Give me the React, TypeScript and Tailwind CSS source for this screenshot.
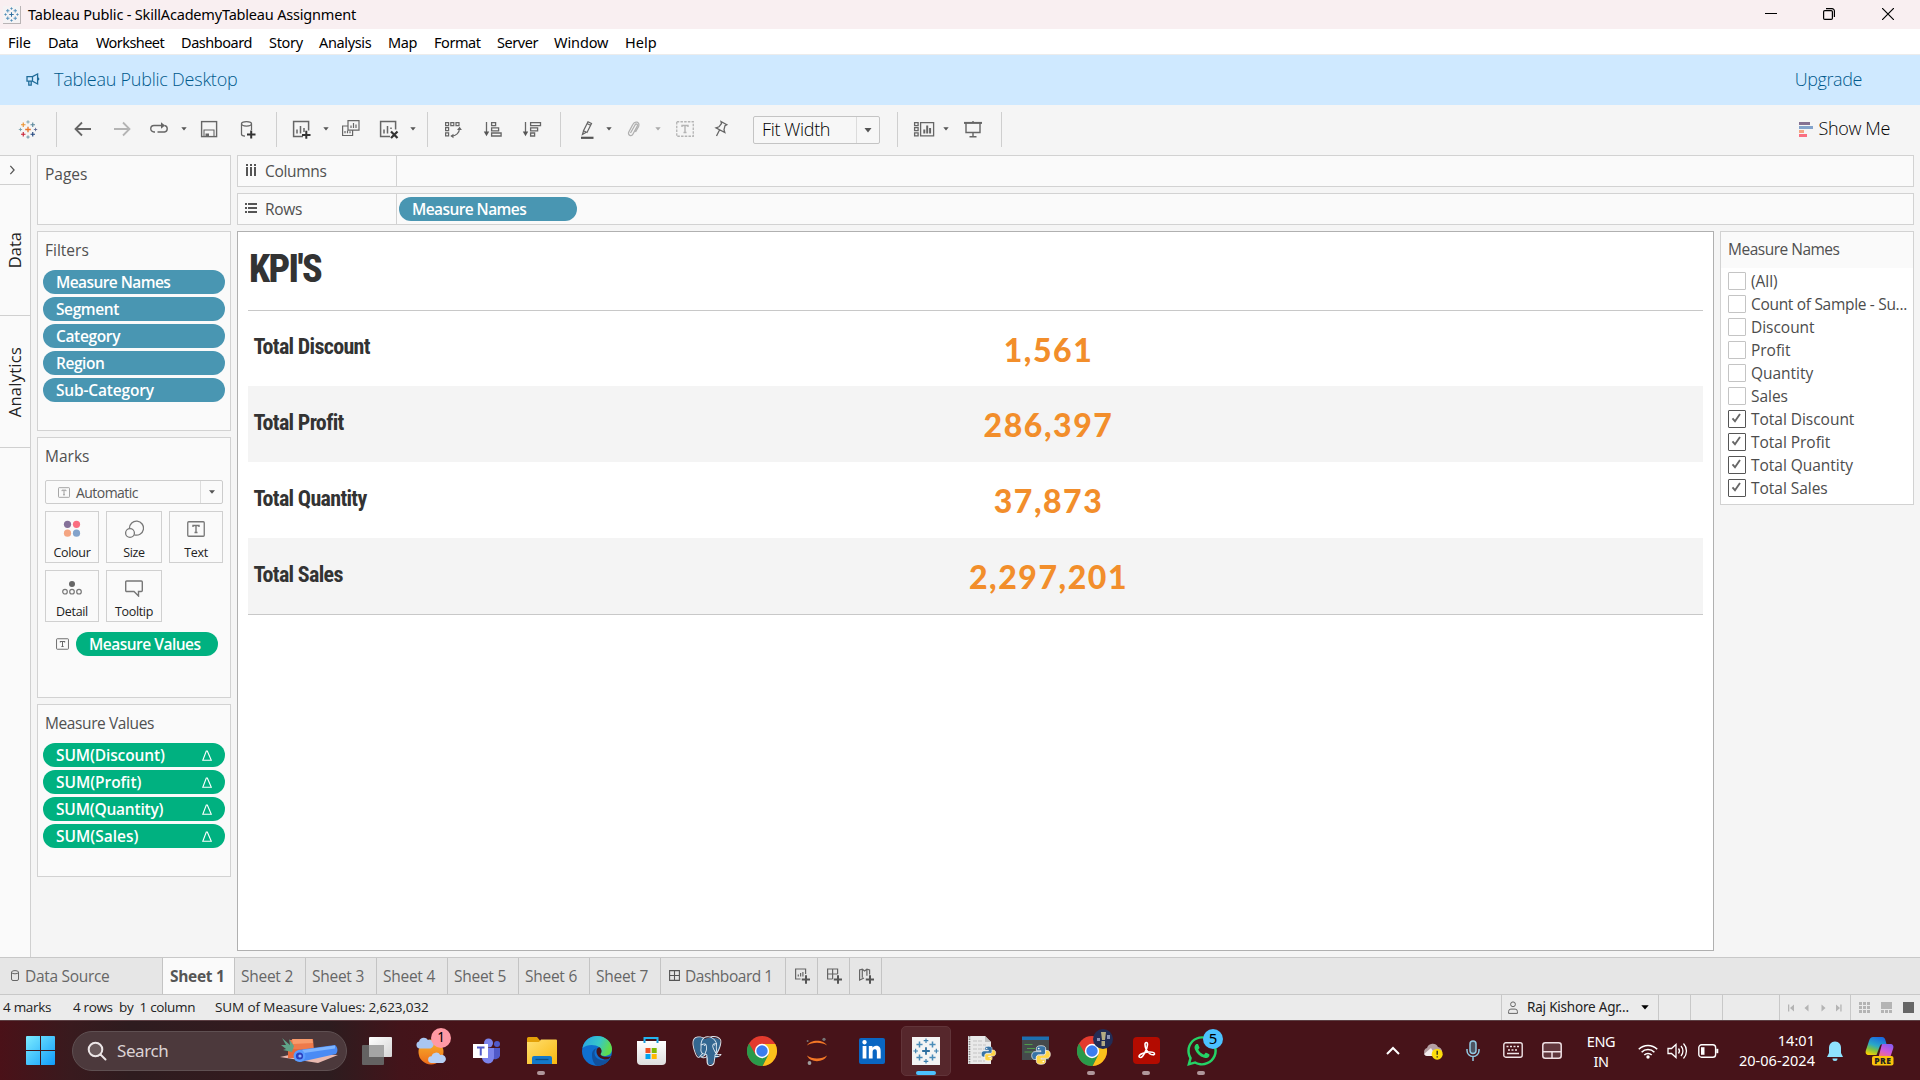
import React from "react";
import { FaLinkedinIn, FaWhatsapp } from "react-icons/fa";
import { SiPostgresql } from "react-icons/si";

type Kids = { children: React.ReactNode };

/* ---------- shared pieces ---------- */

function TBox({ className, color = "#666", dashed = false }: { className: string; color?: string; dashed?: boolean }) {
  return (
    <svg viewBox="0 0 18 16" className={className} fill="none" stroke={color}>
      <rect x="0.75" y="0.75" width="16.5" height="14.5" rx={dashed ? 0 : 1} strokeWidth="1.3" strokeDasharray={dashed ? "2.5 1.2" : undefined} />
      <path d="M6 6V4.5h6V6M9 4.5v7M7.5 11.5h3" strokeWidth="1.4" />
    </svg>
  );
}

function Caret({ className, color = "#555" }: { className: string; color?: string }) {
  return (
    <svg viewBox="0 0 6 4" className={"h-1 w-1.5 shrink-0 " + className}>
      <path d="M0.3 0.3h5.4L3 3.6z" fill={color} />
    </svg>
  );
}

function Sep({ className }: { className: string }) {
  return <div className={"h-[35px] w-px shrink-0 bg-[#cfcfcf] " + className} />;
}

function Ic({ className = "", w = 20, color = "#666", children }: Kids & { className?: string; w?: number; color?: string }) {
  return (
    <svg viewBox={`0 0 ${w} 20`} width={w} height={20} className={"shrink-0 " + className} fill="none" stroke={color} strokeWidth="1.25">
      {children}
    </svg>
  );
}

function TableauMark({ className, mono = false }: { className: string; mono?: boolean }) {
  const c = mono
    ? ["#2f6f9f", "#4b8cb8", "#4b8cb8", "#4b8cb8", "#4b8cb8", "#3b7fae", "#3b7fae", "#3b7fae", "#3b7fae"]
    : ["#e8762c", "#eb912c", "#59879b", "#c72035", "#1f447e", "#7099a6", "#5b6591", "#5b879b", "#7099a6"];
  const plus = (x: number, y: number, r: number, col: string, sw: number) => (
    <path key={`${x}-${y}`} d={`M${x - r} ${y}h${2 * r}M${x} ${y - r}v${2 * r}`} stroke={col} strokeWidth={sw} />
  );
  return (
    <svg viewBox="0 0 34 34" className={className} fill="none">
      {plus(17, 17, 5, c[0], 2.4)}
      {plus(8.5, 8.5, 4, c[1], 2)}
      {plus(25.5, 8.5, 4, c[2], 2)}
      {plus(8.5, 25.5, 4, c[3], 2)}
      {plus(25.5, 25.5, 4, c[4], 2)}
      {plus(17, 3.5, 3, c[5], 1.5)}
      {plus(30.5, 17, 3, c[6], 1.5)}
      {plus(17, 30.5, 3, c[7], 1.5)}
      {plus(3.5, 17, 3, c[8], 1.5)}
    </svg>
  );
}

/* ---------- window chrome ---------- */

function TitleBar() {
  return (
    <div className="flex h-[29px] items-center bg-[#f9eff1]">
      <div className="ml-[3px] flex h-[18px] w-[18px] items-center justify-center border-r border-b border-[#b9b4b5] bg-[#f5f3f4]">
        <TableauMark mono className="h-[15px] w-[15px]" />
      </div>
      <span className="ml-[7px] text-[14.5px] tracking-[-0.188px] text-black">Tableau Public - SkillAcademyTableau Assignment</span>
      <div className="mr-[26px] ml-auto flex -translate-y-px items-center">
        <svg viewBox="0 0 12 12" className="h-3 w-3" stroke="#000"><path d="M0 5.5h12" /></svg>
        <svg viewBox="0 0 12 12" className="ml-[46px] h-3 w-3" fill="none" stroke="#000" strokeWidth="1.2">
          <rect x="0.6" y="2.6" width="8.8" height="8.8" rx="1.2" />
          <path d="M3 0.7h6a2.4 2.4 0 0 1 2.4 2.4v6" />
        </svg>
        <svg viewBox="0 0 12 12" className="ml-[47px] h-3 w-3" stroke="#000" strokeWidth="1.2"><path d="M0 0l12 12M12 0L0 12" /></svg>
      </div>
    </div>
  );
}

const menu: [string, string][] = [
  ["File", "w-10 tracking-[-0.1px]"], ["Data", "w-12"], ["Worksheet", "w-[85px] tracking-[-0.57px]"], ["Dashboard", "w-[88px]"], ["Story", "w-[50px] tracking-[-0.3px]"],
  ["Analysis", "w-[69px] tracking-[-0.35px]"], ["Map", "w-[46px]"], ["Format", "w-[63px]"], ["Server", "w-[57px]"], ["Window", "w-[71px] tracking-[-0.1px]"], ["Help", "w-[60px] tracking-[0.05px]"],
];

function MenuBar() {
  return (
    <div className="flex h-[26px] items-center border-b border-[#ececec] bg-white pt-[3px] pl-2 text-[14.5px] tracking-[-0.45px] text-black">
      {menu.map(([m, w]) => <div key={m} className={"shrink-0 " + w}>{m}</div>)}
    </div>
  );
}

function Banner() {
  return (
    <div className="flex h-[50px] items-center bg-[#cfe9ff] font-['Open_Sans'] text-[18px] text-[#005a8c]">
      <svg viewBox="0 0 14 14" className="ml-[26px] h-[14px] w-[14px]" fill="none" stroke="#1f6c99" strokeWidth="1.3">
        <path d="M1 3.6h5.5L11.6 1v10L6.500 8.200H1zM6.500 3.600v4.600M2.800 8.200v4h2.400v-4M11.600 4.800c1.500.2 1.500 2.200 0 2.400" />
      </svg>
      <span className="-mt-px ml-[14px] text-[18px] font-light tracking-[-0.24px]">Tableau Public Desktop</span>
      <span className="-mt-px mr-[58px] ml-auto font-light tracking-[-0.42px]">Upgrade</span>
    </div>
  );
}

function Toolbar() {
  return (
    <div className="flex h-[50px] items-center bg-[#f5f5f5] pb-[2px]">
      <TableauMark className="ml-[18px] h-[19px] w-5 shrink-0" />
      <Sep className="ml-[18px]" />
      <Ic className="ml-4"><path d="M2.5 10H18M9 3.500L2.500 10 9 16.500" strokeWidth="1.8" /></Ic>
      <Ic className="ml-[19px]" color="#b4b4b4"><path d="M2 10h15.500M11 3.500l6.500 6.500-6.500 6.500" strokeWidth="1.8" /></Ic>
      <Ic className="ml-[17px]"><path d="M6 13H5a3.200 3.200 0 0 1 0-6.500H14.500M15.500 6.500a3.300 3.300 0 0 1 0 6.500H8.500" strokeWidth="1.4" /><path d="M12 3.200l4 3.300-4 3.300z" fill="#666" stroke="none" /></Ic>
      <Caret className="ml-3" />
      <Ic className="ml-3"><rect x="2.600" y="2.600" width="15" height="15" strokeWidth="1.400" /><path d="M5 17.500v-6.500h10v6.500" strokeWidth="1.100" /><path d="M6.500 14.500h3.500v3h-3.500z" fill="#666" stroke="none" /></Ic>
      <Ic className="ml-[19px]">
        <ellipse cx="8.500" cy="4.800" rx="5" ry="2.200" /><path d="M3.500 4.800v10.500c0 1 1.500 1.700 3.500 1.900M13.500 4.800V11" />
        <path d="M9 15.500h8.500M13.200 11.500v8" stroke="#333" strokeWidth="2" />
      </Ic>
      <Sep className="ml-[18px]" />
      <Ic className="ml-[14px]" w={22}>
        <path d="M12 17.500H2.600v-15h15v9M6 14.500v-4M9.500 14.500V7M13 13V9" strokeWidth="1.500" /><path d="M11 16h8.500M15.300 11.800v8" stroke="#333" strokeWidth="2" />
      </Ic>
      <Caret className="ml-[10px]" />
      <Ic className="ml-[11px]"><path d="M8 1.600h11v9.500H8zM11 9V6.500M13.500 9V4M16 9V5.500M8 7H2.600v9.500h10v-5M5 14.300v-2.300M7.500 14.300v-2.500M10 14.300v-2" strokeWidth="1.200" /></Ic>
      <Ic className="ml-[18px]" w={22}>
        <path d="M12 17.500H2.600v-15h15v8M6 14.500v-4M9.500 14.500V7M13 10V8.500" strokeWidth="1.500" /><path d="M13 12.500l6.500 6.500M19.500 12.500L13 19" stroke="#333" strokeWidth="2.200" />
      </Ic>
      <Caret className="ml-[10px]" />
      <Sep className="ml-[11px]" />
      <Ic className="ml-[15px]">
        <path d="M2.600 3.600h3v3h-3zM7.800 3.600h3v3h-3zM13 3.600h3v3h-3zM2.600 8.700h3v3h-3zM2.600 13.900h3v3h-3zM16.500 9c0 5-3.500 8-8 8" strokeWidth="1.200" />
        <path d="M14 11l2.600-3.200 2.300 3.200zM10.500 14.700L7.300 17l3.200 2.300z" fill="#666" stroke="none" />
      </Ic>
      <Ic className="ml-5"><path d="M3.500 3v11M8.600 3.600h4v3h-4zM8.600 8.800h7v3h-7zM8.600 14h9.500v3H8.600z" strokeWidth="1.300" /><path d="M0.800 12.500h5.400L3.500 17.200z" fill="#555" stroke="none" /></Ic>
      <Ic className="ml-[19px]"><path d="M3.500 3v11M8.600 3.600h9.900v3H8.600zM8.600 8.800h7v3h-7zM8.600 14h4v3h-4z" strokeWidth="1.300" /><path d="M0.800 12.500h5.400L3.500 17.200z" fill="#555" stroke="none" /></Ic>
      <Sep className="ml-[18px]" />
      <Ic className="ml-[17px]"><path d="M10 2.800l3.500 1.700-4.500 9-3.500-1.800zM5.500 12l-1 3.500 3.300-2M9 4.500l4 2" /><path d="M3 18.800h12.500" stroke="#555" strokeWidth="2.200" /></Ic>
      <Caret className="ml-2" />
      <Ic className="ml-[11px]" color="#b0b0b0"><path d="M7.500 14l4.500-8c1-1.800 3-.8 2.300 1l-4.300 8c-1.500 3-5.700 1.200-4.200-2l4-7.500c2-4 7.500-2.800 5.800 2L12.500 13" strokeWidth="1.300" /></Ic>
      <Caret className="ml-3" color="#aaa" />
      <div className="ml-[14px] flex w-5 shrink-0 justify-center"><TBox dashed color="#b4b4b4" className="h-4 w-[18px]" /></div>
      <Ic className="ml-[16px]"><path d="M10 2.500l5.800 3.200-1.800 1-1 4 .8 2.800L5 8.800l3-1 2.500-3.300zM8.500 11l-3 6" strokeWidth="1.300" /></Ic>
      <div className="ml-[22px] flex h-7 w-[127px] shrink-0 translate-y-[1px] items-center rounded-[2px] border border-[#c4c4c4] bg-[#f7f7f7]">
        <span className="-mt-px ml-2 font-['Open_Sans'] text-[18px] font-light tracking-[-0.36px] text-black">Fit Width</span>
        <div className="ml-auto flex h-full w-[23px] items-center justify-center border-l border-[#dcdcdc]">
          <svg viewBox="0 0 8 5" className="h-[5px] w-2"><path d="M0.500 0h7L4 4.500z" fill="#555" /></svg>
        </div>
      </div>
      <Sep className="ml-[17px]" />
      <Ic className="ml-[15px]" w={22}>
        <path d="M1.600 3.600h3.500v3H1.600zM1.600 8.700h3.500v3H1.600zM1.600 13.800h3.500v3H1.600zM7.600 3.600h13v13.200h-13z" strokeWidth="1.300" />
        <path d="M11.300 14.500v-4M14.200 14.500V6.500M17.100 14.500V9" strokeWidth="2" />
      </Ic>
      <Caret className="ml-2" />
      <Ic className="ml-[14px]"><path d="M1 3.900h18" strokeWidth="2" /><path d="M3 4v9.500h14V4M10 13.500v4.500M6.500 17.800h7M10 2v2" strokeWidth="1.400" /></Ic>
      <Sep className="ml-[18px]" />
      <div className="mr-[30px] ml-auto flex items-center">
        <div className="flex w-[14px] flex-col gap-px">
          <div className="h-[3px] w-[11px] bg-[#857192]" /><div className="h-[3px] w-[14px] bg-[#83a3cb]" />
          <div className="h-[3px] w-[5px] bg-[#f4a582]" /><div className="h-[3px] w-2 bg-[#fa6f81]" />
        </div>
        <span className="-mt-px ml-1.5 font-['Open_Sans'] text-[18px] font-light tracking-[-0.38px] text-black">Show Me</span>
      </div>
    </div>
  );
}

/* ---------- side panels ---------- */

function Panel({ title, className, children }: { title: string; className: string; children?: React.ReactNode }) {
  return (
    <section className={"shrink-0 border border-[#d2d2d2] bg-[#fafafa] " + className}>
      <h2 className="flex h-[38px] items-center pb-px pl-[7px] text-[15.5px] font-normal text-[#505050]">{title}</h2>
      {children}
    </section>
  );
}

function Pill({ label, className, delta = false }: { label: React.ReactNode; className: string; delta?: boolean }) {
  return (
    <div className={"flex h-6 items-center rounded-full pt-0.5 pl-[13px] text-[15.5px] font-semibold text-white " + className}>
      {label}
      {delta && (
        <svg viewBox="0 0 10 11" className="-mt-0.5 mr-[13px] ml-auto h-[11px] w-[10px]" fill="none" stroke="#fff" strokeWidth="1.1"><path d="M5.300 1L9.300 10.300H0.800L4.300 1z" /></svg>
      )}
    </div>
  );
}

const filters: [string, string][] = [
  ["Measure Names", "tracking-[-0.57px]"], ["Segment", "tracking-[-0.4px]"], ["Category", "tracking-[-0.35px]"], ["Region", "tracking-[-0.45px]"], ["Sub-Category", "tracking-[-0.16px]"],
];
const sums: [string, string][] = [
  ["SUM(Discount)", "tracking-[-0.12px]"], ["SUM(Profit)", "tracking-[-0.05px]"], ["SUM(Quantity)", "tracking-[-0.2px]"], ["SUM(Sales)", "tracking-[0px]"],
];

function MarkButton({ label, className, children }: Kids & { label: string; className: string }) {
  return (
    <div className={"flex h-[52px] flex-col items-center border border-[#d0d0d0] pt-[7px] " + className}>
      <div className="flex h-5 items-center">{children}</div>
      <span className="mt-[6px] text-[12.5px] leading-4 tracking-[-0.32px] text-[#222]">{label}</span>
    </div>
  );
}

function LeftColumn() {
  return (
    <div className="ml-1.5 flex w-[194px] shrink-0 flex-col gap-1.5">
      <Panel title="Pages" className="h-[70px]" />
      <Panel title="Filters" className="h-[200px]">
        <div className="flex flex-col gap-[3px] px-[5px]">
          {filters.map(([f, t]) => <Pill key={f} label={<span className={t}>{f}</span>} className="bg-[#4996b2]" />)}
        </div>
      </Panel>
      <Panel title="Marks" className="h-[261px]">
        <div className="mt-1 ml-[7px] flex h-6 w-[178px] items-center rounded-[2px] border border-[#ccc]">
          <TBox color="#999" className="ml-3 h-[11px] w-[12px]" />
          <span className="ml-[6px] text-[14px] tracking-[-0.55px] text-[#555]">Automatic</span>
          <div className="ml-auto flex h-full w-[22px] items-center justify-center border-l border-[#ddd]"><Caret className="scale-110" /></div>
        </div>
        <div className="mt-[7px] ml-[7px] flex gap-[7px]">
          <MarkButton label="Colour" className="w-[54px]">
            <svg viewBox="0 0 18 18" className="h-[18px] w-[18px]"><circle cx="4.500" cy="4.300" r="3.600" fill="#857199" /><circle cx="13.500" cy="4.300" r="3.600" fill="#fa6f81" /><circle cx="4.500" cy="13.200" r="3.600" fill="#f4a582" /><circle cx="13.500" cy="13.200" r="3.600" fill="#83a3cb" /></svg>
          </MarkButton>
          <MarkButton label="Size" className="w-14">
            <svg viewBox="0 0 20 20" className="mr-px h-5 w-5" fill="none" stroke="#777" strokeWidth="1.300"><path d="M5.500 9.300A7 7 0 1 1 10.300 15.800" /><circle cx="6" cy="14" r="4.400" /></svg>
          </MarkButton>
          <MarkButton label="Text" className="w-[54px]"><TBox color="#777" className="h-4 w-[18px]" /></MarkButton>
        </div>
        <div className="mt-[7px] ml-[7px] flex gap-[7px]">
          <MarkButton label="Detail" className="w-[54px]">
            <svg viewBox="0 0 20 16" className="h-4 w-5" fill="none" stroke="#777" strokeWidth="1.200"><circle cx="10" cy="4" r="3" fill="#666" stroke="none" /><circle cx="3" cy="11.700" r="2.300" /><circle cx="10" cy="11.700" r="2.300" /><circle cx="17" cy="11.700" r="2.300" /></svg>
          </MarkButton>
          <MarkButton label="Tooltip" className="w-14">
            <svg viewBox="0 0 18 18" className="h-[18px] w-[18px]" fill="none" stroke="#777" strokeWidth="1.400"><path d="M1.700 2h14.600a1 1 0 0 1 1 1v8.500a1 1 0 0 1-1 1H13.500V17L9 12.500H1.700a1 1 0 0 1-1-1V3a1 1 0 0 1 1-1z" /></svg>
          </MarkButton>
        </div>
        <div className="mt-[10px] flex items-center pl-[18px]">
          <TBox className="h-3 w-[13px]" />
          <Pill label={<span className="tracking-[-0.5px]">Measure Values</span>} className="ml-[7px] w-[142px] bg-[#00b180]" />
        </div>
      </Panel>
      <Panel title="Measure Values" className="h-[173px] tracking-[-0.4px]">
        <div className="flex flex-col gap-[3px] px-[5px]">
          {sums.map(([s, t]) => <Pill key={s} delta label={<span className={t}>{s}</span>} className="bg-[#00b180]" />)}
        </div>
      </Panel>
    </div>
  );
}

function Rail() {
  return (
    <div className="flex w-[31px] shrink-0 flex-col border-t border-r border-[#d0d0d0] bg-[#fafafa] text-[17px] text-[#222]">
      <div className="flex h-[29px] items-center border-b border-[#d0d0d0] pl-2">
        <svg viewBox="0 0 8 12" className="h-[10px] w-2" fill="none" stroke="#555" strokeWidth="1.500"><path d="M2 1l4.500 5L2 11" /></svg>
      </div>
      <div className="flex h-[131px] items-center justify-center border-b border-[#d0d0d0]">
        <span className="rotate-180 font-['Open_Sans'] text-[16.5px] [writing-mode:vertical-rl]">Data</span>
      </div>
      <div className="flex h-[132px] items-center justify-center border-b border-[#d0d0d0]">
        <span className="translate-y-px rotate-180 font-['Open_Sans'] text-[16.5px] tracking-[0.25px] [writing-mode:vertical-rl]">Analytics</span>
      </div>
    </div>
  );
}

/* ---------- shelves and view ---------- */

function Shelf({ label, icon, children }: { label: string; icon: React.ReactNode; children?: React.ReactNode }) {
  return (
    <div className="flex h-8 items-center border border-[#d2d2d2] bg-[#fafafa]">
      <div className="flex h-full w-[159px] items-center border-r border-[#d2d2d2] pl-[7px] text-[15.5px] tracking-[-0.3px] text-[#505050]">
        {icon}<span className="mt-0.5 ml-2">{label}</span>
      </div>
      {children}
    </div>
  );
}

const kpis: [string, string][] = [
  ["Total Discount", "1,561"], ["Total Profit", "286,397"], ["Total Quantity", "37,873"], ["Total Sales", "2,297,201"],
];

function View() {
  return (
    <div className="h-[720px] w-[1477px] border border-[#b0b0b0] bg-white px-[10px] pt-[15px]">
      <h1 className="h-[63px] pl-px font-['Roboto_Condensed'] text-[38px] leading-[44px] font-extrabold tracking-[-1.6px] text-[#333]">KPI&apos;S</h1>
      <div className="border-y border-[#c8c8c8]">
        {kpis.map(([k, v], i) => (
          <div key={k} className={(i % 2 ? "bg-[#f4f4f4] " : "") + (i === 0 ? "h-[75px] " : "h-[76px] ") + "flex items-center"}>
            <span className="w-[145px] shrink-0 -translate-y-[2px] pl-[5.5px] font-['Roboto_Condensed'] text-[22px] font-bold tracking-[-0.68px] text-[#333]">{k}</span>
            <span className="grow translate-y-px pl-px text-center font-['Lato'] text-[32px] font-black tracking-[1.55px] text-[#f28e2b]">{v}</span>
          </div>
        ))}
      </div>
    </div>
  );
}

const measures = ["(All)", "Count of Sample - Su...", "Discount", "Profit", "Quantity", "Sales", "Total Discount", "Total Profit", "Total Quantity", "Total Sales"];

function MeasureFilter() {
  return (
    <div className="h-[274px] w-[194px] border border-[#d2d2d2] bg-white">
      <h2 className="flex h-9 items-center bg-[#fafafa] pl-[7px] text-[15.5px] font-normal tracking-[-0.5px] text-[#505050]">Measure Names</h2>
      <ul className="pt-1 pl-[7px]">
        {measures.map((m, i) => (
          <li key={m} className="flex h-[23px] items-center">
            <span className={(i > 5 ? "border-[#555] " : "border-[#c4c4c4] ") + "mb-[5px] flex h-[18px] w-[18px] shrink-0 items-center justify-center rounded-[1px] border bg-white"}>
              {i > 5 && <svg viewBox="0 0 10 10" className="mr-[3px] mb-0.5 h-[10px] w-[10px]" fill="none" stroke="#666" strokeWidth="1.900"><path d="M1.500 5.300l2.500 3L9 1" /></svg>}
            </span>
            <span className={"-mt-[3px] ml-[5px] text-[15.5px] whitespace-nowrap text-[#4c4c4c] " + (i === 1 ? "tracking-[-0.31px]" : "tracking-[-0.03px]")}>{m}</span>
          </li>
        ))}
      </ul>
    </div>
  );
}

/* ---------- tabs and status ---------- */

function NewTab({ children }: Kids) {
  return <div className="flex w-8 items-center border-r border-[#c4c4c4] pl-[9px]"><svg viewBox="0 0 16 16" className="h-4 w-4" fill="none" stroke="#666" strokeWidth="1.200">{children}<path d="M6.800 11.500H15M11 7.300v8.400" strokeWidth="2" stroke="#555" /></svg></div>;
}

function Tabs() {
  return (
    <div className="flex h-[38px] border-y border-[#c8c8c8] bg-[#e6e6e6] text-[15.5px] text-[#666]">
      <div className="flex w-[163px] items-center border-r border-[#c4c4c4] pt-px pl-[11px] tracking-[-0.3px]">
        <svg viewBox="0 0 8 11" className="-mt-[3px] mr-[6px] h-[11px] w-2" fill="none" stroke="#666"><ellipse cx="4" cy="2.200" rx="3.500" ry="1.600" /><path d="M0.500 2.200V9a1.500 1.500 0 0 0 1.500 1.500h4A1.500 1.500 0 0 0 7.500 9V2.200" /></svg>
        Data Source
      </div>
      <div className="w-[72px] border-r border-[#c4c4c4] bg-[#fafafa] pl-[7px] leading-[36px] font-bold tracking-[-0.3px] text-[#555]">Sheet 1</div>
      {[2, 3, 4, 5, 6, 7].map((n) => (
        <div key={n} className="w-[71px] border-r border-[#c4c4c4] pl-[6px] leading-[37px] tracking-[-0.26px]">Sheet {n}</div>
      ))}
      <div className="flex w-[125px] items-center border-r border-[#c4c4c4] pt-px pl-2 tracking-[-0.47px]">
        <svg viewBox="0 0 11 11" className="-mt-[3px] mr-[5px] h-[11px] w-[11px]" fill="none" stroke="#555"><path d="M0.600 0.600h9.800v9.800H0.600zM5.500 0.600v9.800M0.600 5.500h9.800" strokeWidth="1.100" /></svg>
        Dashboard 1
      </div>
      <NewTab><path d="M5.500 11H0.600V1h10v5M3.300 8.500v-2M5.600 8.500V5M7.900 8.500V4" /></NewTab>
      <NewTab><path d="M5.500 11H0.600V1h10v5M5.600 1v10M0.600 6h10" /></NewTab>
      <NewTab><path d="M5 10L0.600 12V2l2.700-0.800L5.600 3l2.300-1.800L10.600 2v4.500M3.300 1.200v8.600M7.900 1.200v6.500" /></NewTab>
    </div>
  );
}

function Status() {
  return (
    <div className="flex h-[25px] items-center bg-[#ebebeb] text-[13.5px] text-[#222]">
      <span className="ml-[3px] w-[70px] tracking-[-0.3px]">4 marks</span>
      <span className="w-[142px] tracking-[-0.35px] whitespace-pre">4 rows  by  1 column</span>
      <span className="tracking-[-0.1px]">SUM of Measure Values: 2,623,032</span>
      <div className="ml-auto flex h-full">
        <div className="flex w-[157px] items-center border-l border-[#c8c8c8] pl-[6px]">
          <svg viewBox="0 0 10 13" className="h-[13px] w-[10px]" fill="none" stroke="#666"><circle cx="5" cy="3.300" r="2.400" /><path d="M0.600 12.400v-2a2.300 2.300 0 0 1 2.300-2.300h4.200a2.300 2.300 0 0 1 2.300 2.300v2z" /></svg>
          <span className="ml-[9px] w-[114px] font-['Noto_Sans'] text-[13.5px] tracking-[-0.2px]">Raj Kishore Agr...</span>
          <svg viewBox="0 0 8 5" className="h-[5px] w-2 shrink-0"><path d="M0.300 0.300h7.400L4 4.500z" fill="#000" /></svg>
        </div>
        <div className="w-8 border-l border-[#c8c8c8]" />
        <div className="w-8 border-l border-[#c8c8c8]" />
        <div className="w-[57px] border-l border-[#c8c8c8]" />
        <div className="flex w-[71px] items-center border-l border-[#c8c8c8] pl-2">
          <svg viewBox="0 0 54 8" className="h-2 w-[54px]" fill="#b4b4b4"><path d="M0 0.500h1.300v7H0zM6 0.500v7L2 4zM20.500 0.500v7l-4-3.500zM33.500 0.500v7l4-3.500zM48 0.500v7l4-3.500zM52.300 0.500h1.300v7h-1.300z" /></svg>
        </div>
        <div className="flex w-[70px] items-center gap-[11px] border-l border-[#c8c8c8] pl-2">
          <svg viewBox="0 0 11 11" className="h-[11px] w-[11px]" fill="#b4b4b4"><path d="M0 0h3v3H0zM4 0h3v3H4zM8 0h3v3H8zM0 4h3v3H0zM4 4h3v3H4zM8 4h3v3H8zM0 8h3v3H0zM4 8h3v3H4zM8 8h3v3H8z" /></svg>
          <svg viewBox="0 0 11 11" className="h-[11px] w-[11px]" fill="#b4b4b4"><path d="M0 0h11v7H0zM0 8h3v3H0zM4 8h3v3H4zM8 8h3v3H8z" /></svg>
          <div className="h-[11px] w-[11px] bg-[#666]" />
        </div>
      </div>
    </div>
  );
}

/* ---------- taskbar ---------- */

function TaskIcon({ running = false, children }: Kids & { running?: boolean }) {
  return (
    <div className="relative flex h-[60px] w-[55px] shrink-0 items-center justify-center">
      {children}
      {running && <div className="absolute bottom-[6px] left-[23px] h-1 w-2 rounded-full bg-[#b0979b]" />}
    </div>
  );
}

function Chrome() {
  return (
    <svg viewBox="0 0 30 30" className="h-[30px] w-[30px]">
      <circle cx="15" cy="15" r="15" fill="#e33b2e" />
      <path d="M15 8h13.300A15 15 0 0 1 15.500 30L21.500 18z" fill="#fcc21b" />
      <path d="M2 7.500A15 15 0 0 0 15.500 30l6-11.500L15 22 8.500 18.500z" fill="#2a9a4a" />
      <circle cx="15" cy="15" r="7.200" fill="#fff" /><circle cx="15" cy="15" r="5.700" fill="#3b7def" />
    </svg>
  );
}

function Python({ className }: { className: string }) {
  const d = "M12 1c-4 0-5.500 1.300-5.500 3.500V7H12v1H5c-2.500 0-4 2-4 4.700s1.500 4.600 3.500 4.600h2V15c0-2 1.500-3.500 3.500-3.500h5c1.500 0 2.500-1 2.500-2.500V4.500C17.500 2 15.500 1 12 1z";
  return (
    <svg viewBox="-1 -1 26 26" className={className} stroke="#fff" strokeWidth="0.800">
      <path d={d} fill="#3873a5" /><path d={d} transform="rotate(180 12 12)" fill="#ffd545" />
      <circle cx="9.300" cy="4.300" r="1" fill="#fff" stroke="none" /><circle cx="14.700" cy="19.700" r="1" fill="#fff" stroke="none" />
    </svg>
  );
}

function Taskbar() {
  return (
    <div className="flex h-[60px] items-center border-t border-[#5c3f43] bg-[linear-gradient(90deg,#4a1118_0px,#391a1e_70px,#2e1c1f_130px,#331b1f_250px,#2d1c1f_330px,#43141a_400px,#471319_460px,#471319_100%)] text-[#f4eeef]">
      <svg viewBox="0 0 29 29" className="ml-[26px] h-[29px] w-[29px] shrink-0">
        <defs><linearGradient id="win" gradientUnits="userSpaceOnUse" x1="0" y1="0" x2="29" y2="29"><stop offset="0" stopColor="#7cecff" /><stop offset="1" stopColor="#109cfb" /></linearGradient></defs>
        <path d="M1 0h13v14H0V1a1 1 0 0 1 1-1zM15 0h13a1 1 0 0 1 1 1v13H15zM0 15h14v14H1a1 1 0 0 1-1-1zM15 15h14v13a1 1 0 0 1-1 1H15z" fill="url(#win)" />
      </svg>
      <div className="ml-[17px] flex h-10 w-[275px] shrink-0 items-center rounded-full border border-[#5f5052] bg-[#4c393c]">
        <svg viewBox="0 0 20 20" className="ml-[14px] h-5 w-5" fill="none" stroke="#ece6e7" strokeWidth="2"><circle cx="8.500" cy="8.500" r="6.800" fill="#6a5a5c" /><path d="M13.500 13.500l5 5" strokeLinecap="round" /></svg>
        <span className="ml-[10px] text-[17px] tracking-[-0.4px] text-[#dcd3d5]">Search</span>
        <svg viewBox="0 0 58 28" className="mr-2 ml-auto h-7 w-[58px]">
          <path d="M0 20l18-4 40 2-20 8z" fill="#e9b9b0" />
          <path d="M10 3l23-1 1 12H12z" fill="#ee7a4b" /><path d="M12 2l20 0 1 4-20 1z" fill="#f89b6c" /><path d="M8 12h15v9H8z" fill="#e8693a" />
          <path d="M2 1l8 7-1-6 5 7-2 6-9-2 3-1-5-4 5 0z" fill="#5fa387" />
          <path d="M18 13l37-5c3 2 3 7 1 9l-36 8z" fill="#4a8bf5" /><path d="M22 13l33-4.500v3L24 16z" fill="#7db4ff" />
          <circle cx="19.500" cy="19" r="6" fill="#5a9cff" /><circle cx="19.500" cy="19" r="3.600" fill="#2c3fbf" /><circle cx="20" cy="19" r="1.600" fill="#8fb6ff" />
        </svg>
      </div>
      <div className="ml-0.5 flex">
        <TaskIcon>
          <svg viewBox="0 0 30 28" className="h-7 w-[30px]"><defs><linearGradient id="tv" x1="0" y1="0" x2="1" y2="1"><stop offset="0" stopColor="#fff" /><stop offset="1" stopColor="#d5d5d5" /></linearGradient></defs><rect x="7" y="0" width="23" height="20" rx="1" fill="url(#tv)" /><rect x="0" y="8" width="22" height="20" rx="1" fill="#666" fillOpacity="0.950" /><path d="M7 8h15v12H7z" fill="#a5a5a5" /></svg>
        </TaskIcon>
        <TaskIcon>
          <svg viewBox="0 0 30 28" className="mr-px h-7 w-[30px]"><defs><linearGradient id="sun" x1="0" y1="0" x2="0" y2="1"><stop offset="0" stopColor="#f7b52c" /><stop offset="1" stopColor="#ef6c1a" /></linearGradient></defs>
            <circle cx="15" cy="15" r="12.500" fill="url(#sun)" />
            <path d="M3.500 11.500a3.600 3.600 0 0 1-.5-7 5 5 0 0 1 9-1.500 4.400 4.400 0 0 1 2.500 8.500z" fill="#a9c6f0" />
            <path d="M15.500 26a3.400 3.400 0 0 1 0-6.800 4.800 4.800 0 0 1 8.800-1.200 4 4 0 0 1 2.700 8z" fill="#b7d0f5" />
          </svg>
          <div className="absolute top-[7px] right-2 flex h-5 w-5 items-center justify-center rounded-full bg-[#ff99a4] text-[13.500px] text-black">1</div>
        </TaskIcon>
        <TaskIcon>
          <svg viewBox="0 0 28 26" className="h-[26px] w-7"><circle cx="15.500" cy="5" r="4.500" fill="#7b83eb" /><circle cx="24" cy="6" r="3" fill="#5059c9" /><path d="M19 10h8v8a5 5 0 0 1-8 2z" fill="#5059c9" /><path d="M9 10h12v9a6 6 0 0 1-12 1z" fill="#7b83eb" /><path d="M0 6h15v14H0z" fill="#fff" /><path d="M4 9.500h7.500M7.750 9.500v8" stroke="#5059c9" strokeWidth="2" /></svg>
        </TaskIcon>
        <TaskIcon running>
          <svg viewBox="0 0 30 27" className="h-[27px] w-[30px]"><defs><linearGradient id="fo" x1="0" y1="0" x2="1" y2="1"><stop offset="0" stopColor="#ffdf70" /><stop offset="1" stopColor="#f9b80f" /></linearGradient></defs><path d="M0 1.500A1.500 1.500 0 0 1 1.500 0H10l3 3.500V9H0z" fill="#e3a008" /><path d="M0 5h12l2-2.500h15a1 1 0 0 1 1 1V27H0z" fill="url(#fo)" /><path d="M5 27v-6a2 2 0 0 1 2-2h16a2 2 0 0 1 2 2v6z" fill="#1479c9" /><path d="M8.500 22.500h13" stroke="#0b4f86" strokeWidth="1.300" /></svg>
        </TaskIcon>
        <TaskIcon>
          <svg viewBox="0 0 30 30" className="h-[30px] w-[30px]"><defs><linearGradient id="e1" x1="0" y1="0" x2="1" y2="0.300"><stop offset="0.100" stopColor="#2aa8e0" /><stop offset="0.600" stopColor="#37c6c9" /><stop offset="1" stopColor="#5fdc4f" /></linearGradient></defs>
            <circle cx="15" cy="15" r="15" fill="#0f6fd0" />
            <path d="M0.500 12C2 4 8.500 0 15 0c9 0 15 6.500 15 13 0 5-4 7-7.500 7-3 0-4.500-1-4-2 1.500-2 1.500-5-1-6.800C13 8 5 8 0.500 12z" fill="url(#e1)" />
            <path d="M10 19c0-4 2-6 5-7-5 4-2 11 4 12 3.500.700 6.500 0 9-1.500C25 28 20 30 15 30c-3-2-5-6-5-11z" fill="#11509c" />
            <path d="M18.500 18c1.500-2 1.500-5-1-6.800-3 0-3.500 4-2.500 6.800 1 3 5 5.500 9 5.500 2 0 4-1 5-3.500-2 1.300-10 1.500-10.500-2z" fill="#471319" />
          </svg>
        </TaskIcon>
        <TaskIcon>
          <svg viewBox="0 0 30 30" className="mr-px h-[30px] w-[30px]"><defs><linearGradient id="st" x1="0" y1="0" x2="0" y2="1"><stop offset="0" stopColor="#fff" /><stop offset="1" stopColor="#dedede" /></linearGradient></defs><path d="M8.500 7V2h13v5" fill="none" stroke="#23b5f0" strokeWidth="2" /><path d="M1 5h29v20a4 4 0 0 1-4 4H5a4 4 0 0 1-4-4z" fill="url(#st)" /><path d="M9.500 12h5v5h-5z" fill="#f25022" /><path d="M15.700 12h5v5h-5z" fill="#7fba00" /><path d="M9.500 18h5v5h-5z" fill="#00a4ef" /><path d="M15.700 18h5v5h-5z" fill="#ffb900" /><path d="M8.500 5v2M21.500 5v2" stroke="#1a9ad8" strokeWidth="2" /></svg>
        </TaskIcon>
        <TaskIcon>
          <div className="relative h-[30px] w-[30px]">
            <svg viewBox="0 0 30 30" className="absolute inset-0 h-[30px] w-[30px]" fill="#336791"><path d="M2 3c4-3 8-2 11 0 4-2 9-2 14 0 3 4 1 10-2 15l2 3-5 2-1 5-5 1-2-10-6 3C3 18 0 8 2 3z" /></svg>
            <SiPostgresql className="absolute inset-0 h-[30px] w-[30px] text-[#dfe9f1]" />
          </div>
        </TaskIcon>
        <TaskIcon><Chrome /></TaskIcon>
        <TaskIcon>
          <svg viewBox="0 0 22 28" className="h-7 w-[22px]"><path d="M1 8.500C4 2 18 2 21 8.500 16 4.800 6 4.800 1 8.500zM1 18.500C4 26 18 26 21 18.500 16 22.500 6 22.500 1 18.500z" fill="#f37726" /><circle cx="18" cy="2.300" r="1.600" fill="#767677" /><circle cx="3.500" cy="26" r="1.900" fill="#9e9e9e" /><circle cx="1.600" cy="4" r="1" fill="#767677" /></svg>
        </TaskIcon>
        <TaskIcon><div className="flex h-[26px] w-[26px] items-center justify-center rounded-[2px] bg-[#0a66c2]"><FaLinkedinIn className="h-[21px] w-[21px] text-white" /></div></TaskIcon>
        <TaskIcon>
          <div className="mr-px flex h-[50px] w-[50px] items-center justify-center rounded-[5px] border border-[#613439] bg-[#56272c]">
            <div className="flex h-7 w-7 items-center justify-center bg-[#f4f4f4]"><TableauMark mono className="h-[26px] w-[26px]" /></div>
          </div>
          <div className="absolute bottom-[6px] left-[17px] h-1 w-5 rounded-full bg-[#4cc2ff]" />
        </TaskIcon>
        <TaskIcon>
          <div className="relative h-[29px] w-7">
            <svg viewBox="0 0 28 29" className="h-[29px] w-7"><path d="M0 0h17l6 6v22H0z" fill="#e9e9e9" /><path d="M1.500 0v28" stroke="#888" strokeDasharray="1.500 1" strokeWidth="1.600" /><path d="M5 5h10M5 9h13M5 13h12M5 17h8M5 21h8M5 25h12" stroke="#c3c3c3" strokeDasharray="4 1" /><path d="M17 0v6h6z" fill="#bdbdbd" /></svg>
            <Python className="absolute top-[9px] left-[12px] h-[17px] w-[17px]" />
          </div>
        </TaskIcon>
        <TaskIcon>
          <div className="relative h-[29px] w-[29px]">
            <svg viewBox="0 0 29 29" className="h-[29px] w-[29px]"><path d="M0 1h27v23H0z" fill="#454a4c" /><path d="M0 0.500h27v3.500H0z" fill="#1d6fb0" /><path d="M2.500 8.500h8M5 12.500h8M2.500 16h8" stroke="#4f9c4a" /></svg>
            <Python className="absolute top-[8px] left-[8px] h-[22px] w-[22px]" />
          </div>
        </TaskIcon>
        <TaskIcon running>
          <Chrome />
          <svg viewBox="0 0 20 20" className="absolute top-[8px] right-[6px] h-5 w-5"><circle cx="10" cy="10" r="10" fill="#232c55" /><path d="M8 3h5l-1 8h-3zM8.500 12h3.500v5H8.500z" fill="#b5ac83" /><path d="M14 6h3v4h-3zM4 9h3v3H4z" fill="#8d95b5" /></svg>
        </TaskIcon>
        <TaskIcon running>
          <svg viewBox="0 0 27 27" className="h-[27px] w-[27px]"><rect width="27" height="27" rx="4" fill="#b30b00" /><path d="M6 19.500c0-2.500 7-4.500 11-4.500 3 0 4.500.800 4.500 1.900 0 1.300-2.500 1.200-4.500-.100-3-2-5-6-5-9.500 0-2.500 2.700-2.500 2.500.3C14.200 12 10 20.500 7.700 20.500 6.800 20.500 6 20.200 6 19.500z" fill="none" stroke="#fff" strokeWidth="1.600" /></svg>
        </TaskIcon>
        <TaskIcon running>
          <FaWhatsapp className="h-[34px] w-[34px] text-[#25d366]" />
          <div className="absolute top-[8px] right-[6px] flex h-5 w-5 items-center justify-center rounded-full bg-[#4cc2ff] text-[15px] text-black">5</div>
        </TaskIcon>
      </div>
      <div className="mr-[26px] ml-auto flex items-center">
        <svg viewBox="0 0 14 9" className="h-[9px] w-[14px]" fill="none" stroke="#fff" strokeWidth="2"><path d="M1 8l6-6 6 6" /></svg>
        <svg viewBox="0 0 20 18" className="ml-[23px] h-[18px] w-5"><path d="M4 14a4.200 4.200 0 0 1 0-8 6 6 0 0 1 11-1 5 5 0 0 1 2 9z" fill="#b49fa2" /><path d="M1 12l7-6 5 8H4a4 4 0 0 1-3-2z" fill="#f3ecec" /><circle cx="14.200" cy="12.200" r="5.500" fill="#fcdc0c" /><path d="M14.200 8.800v4M14.200 14.300v1.300" stroke="#222" strokeWidth="1.300" /></svg>
        <svg viewBox="0 0 14 21" className="ml-[23px] h-[21px] w-[14px]" fill="none" stroke="#92c9e2" strokeWidth="1.500"><rect x="4" y="1" width="6" height="12.500" rx="3" fill="#4c5462" /><path d="M1 9v1.500a6 6 0 0 0 12 0V9M7 16.500V21" /></svg>
        <svg viewBox="0 0 20 16" className="mb-0.5 ml-[23px] h-4 w-5" fill="none" stroke="#efe3e5" strokeWidth="1.400"><rect x="0.800" y="0.800" width="18.400" height="14.400" rx="2" /><path d="M3.500 4.500h2M7 4.500h2M10.500 4.500h2M14 4.500h2M5 8h2M8.500 8h2M12 8h2M4 11.500h12" /></svg>
        <svg viewBox="0 0 20 17" className="ml-[19px] h-[17px] w-5" fill="none" stroke="#efdfe3" strokeWidth="1.500"><rect x="0.800" y="0.800" width="18.400" height="15.400" rx="2.500" fill="#61373d" /><path d="M1 9.800h18M10 9.800v6.400" /></svg>
        <div className="ml-[25px] flex w-[28px] flex-col items-center text-[14.500px] leading-5 tracking-[-0.4px] text-white"><span>ENG</span><span>IN</span></div>
        <svg viewBox="0 0 20 16" className="ml-[23px] h-4 w-5" fill="none" stroke="#fff" strokeWidth="1.600"><path d="M0.800 6.300a13 13 0 0 1 18.400 0M3.600 9.200a9 9 0 0 1 12.800 0M6.300 12a5.300 5.300 0 0 1 7.400 0" /><circle cx="10" cy="14" r="1.700" fill="#fff" stroke="none" /></svg>
        <svg viewBox="0 0 21 18" className="ml-[9px] h-[18px] w-[21px]" fill="none" stroke="#fff" strokeWidth="1.300"><path d="M1 6.500h3.500L9 2.500v13L4.500 11.500H1zM11.500 6.500a4 4 0 0 1 0 5M14 4a7.500 7.500 0 0 1 0 10M16.500 1.500a11 11 0 0 1 0 15" /></svg>
        <svg viewBox="0 0 21 14" className="ml-[10px] h-[14px] w-[21px]" fill="none" stroke="#fff" strokeWidth="1.400"><rect x="0.800" y="0.800" width="16.800" height="12.400" rx="2.800" /><path d="M3 3.200h3.500v7.600H3z" fill="#fff" stroke="none" /><path d="M19.300 4.800v4.400" strokeWidth="2" /></svg>
        <div className="mb-[2px] ml-[18px] flex w-[78px] flex-col items-end text-[14.500px] leading-5 tracking-[0.04px] text-white"><span>14:01</span><span>20-06-2024</span></div>
        <svg viewBox="0 0 16 20" className="ml-[12px] h-5 w-4" fill="#8fe3ff"><path d="M8 0.500c4 0 6 3 6 6.500v5l2 4H0l2-4V7C2 3.500 4 0.500 8 0.500zM5.500 17.500h5a2.500 2.500 0 0 1-5 0z" /></svg>
        <svg viewBox="0 0 29 30" className="ml-[22px] h-[30px] w-[29px]">
          <defs>
            <linearGradient id="c1" x1="0.600" y1="0" x2="0.200" y2="1"><stop offset="0" stopColor="#1a6be0" /><stop offset="0.450" stopColor="#2aa8c8" /><stop offset="0.700" stopColor="#7cc142" /><stop offset="1" stopColor="#ffd000" /></linearGradient>
            <linearGradient id="c2" x1="0.700" y1="0" x2="0.300" y2="1"><stop offset="0" stopColor="#8a5cf0" /><stop offset="0.500" stopColor="#d05ad8" /><stop offset="1" stopColor="#ff7a5c" /></linearGradient>
          </defs>
          <path d="M17 8h8c3 0 4 2 3 5l-2 6c-1 3-2 4-5 4h-8z" fill="url(#c2)" />
          <path d="M8 1h9c2 0 3 1.500 3.500 3.500L21.500 8H18c-2 0-3 1-3.500 3L11.500 19H4c-3 0-4-2-3-5L4 5C5 2 6 1 8 1z" fill="url(#c1)" />
          <rect x="7" y="20" width="21.500" height="9.500" rx="2" fill="#fbc40c" />
          <text x="17.800" y="27.900" textAnchor="middle" fontFamily="Open Sans" fontWeight="800" fontSize="8.500" letterSpacing="0.500" fill="#222">PRE</text>
        </svg>
      </div>
    </div>
  );
}

export default function App() {
  return (
    <div className="flex h-[1080px] w-[1920px] flex-col overflow-hidden bg-[#f5f5f5] font-['Noto_Sans',sans-serif]">
      <TitleBar />
      <MenuBar />
      <Banner />
      <Toolbar />
      <main className="flex h-[802px] font-['Open_Sans',sans-serif]">
        <Rail />
        <LeftColumn />
        <div className="ml-1.5 flex w-[1677px] flex-col gap-1.5">
          <Shelf label="Columns" icon={<svg viewBox="0 0 12 14" className="mb-[2px] h-[14px] w-3" fill="#555"><path d="M1 1h2v2H1zM5 1h2v2H5zM9 1h2v2H9zM1 4h2v9H1zM5 4h2v9H5zM9 4h2v9H9z" /></svg>} />
          <Shelf label="Rows" icon={<svg viewBox="0 0 12 12" className="mb-[2px] h-3 w-3" fill="#555"><path d="M0 1h2v2H0zM0 5h2v2H0zM0 9h2v2H0zM3 1h9v2H3zM3 5h9v2H3zM3 9h9v2H3z" /></svg>}>
            <Pill label={<span className="tracking-[-0.58px]">Measure Names</span>} className="ml-[2px] w-[178px] bg-[#4996b2]" />
          </Shelf>
          <div className="flex gap-1.5">
            <View />
            <MeasureFilter />
          </div>
        </div>
      </main>
      <div className="font-['Open_Sans',sans-serif]">
        <Tabs />
        <Status />
      </div>
      <Taskbar />
    </div>
  );
}
